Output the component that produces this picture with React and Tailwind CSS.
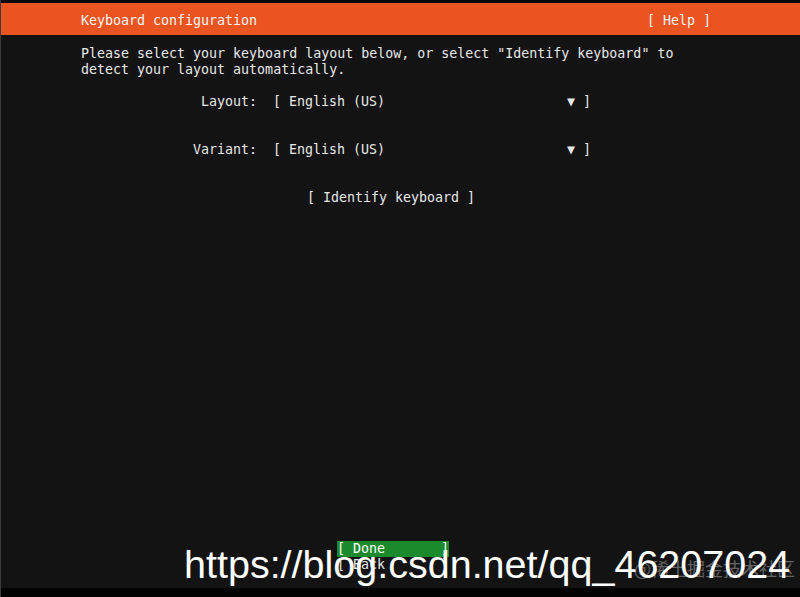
import React from 'react';

const mono = { fontFamily: '"DejaVu Sans Mono", "Liberation Mono", monospace' };

const SelectRow = ({ label, value }) => (
  <div className="flex h-[16px] items-center">
    <div className="w-[176px] text-right">{label}</div>
    <div className="ml-[16px] flex w-[318px] justify-between whitespace-pre">
      <span>[ {value}</span>
      <span>▼ ]</span>
    </div>
  </div>
);

export default function App() {
  return (
    <div
      className="relative flex h-[597px] w-[800px] flex-col overflow-hidden border-l border-[#3c3c3c] bg-[#131313] text-[13.3px] leading-[16px] text-[#e8e8e8]"
      style={mono}
    >
      <div className="h-[3px] bg-[#0a0a0a]" />
      <div className="flex h-[32px] items-center justify-between bg-[#e95420] pl-[80px] pr-[89px] pt-[4px] text-[#f6f6f6]">
        <span>Keyboard configuration</span>
        <span>[ Help ]</span>
      </div>

      <div className="pl-[80px] pt-[11px]">
        <p>Please select your keyboard layout below, or select "Identify keyboard" to</p>
        <p>detect your layout automatically.</p>

        <div className="mt-[16px] flex flex-col gap-[32px]">
          <SelectRow label="Layout:" value="English (US)" />
          <SelectRow label="Variant:" value="English (US)" />
          <div className="h-[16px] pl-[226px]">[ Identify keyboard ]</div>
        </div>
      </div>

      <div className="mt-auto flex flex-col pb-[15px] pl-[336px]">
        <div className="h-[16px] w-[112px] whitespace-pre bg-[#1b8a2c] text-white">[ Done       ]</div>
        <div className="h-[16px] w-[112px] whitespace-pre">[ Back       ]</div>
      </div>
      <div className="h-[9px] bg-[#030303]" />

      <div
        className="pointer-events-none absolute left-[633px] top-[559px] text-[18px] leading-none text-white/35"
        style={{ fontFamily: '"Noto Sans CJK SC", "Noto Sans", sans-serif' }}
      >
        @稀土掘金技术社区
      </div>
      <div
        className="pointer-events-none absolute left-[183px] top-[545px] whitespace-nowrap text-[39.5px] leading-none text-white"
        style={{ fontFamily: '"Liberation Sans", Arial, sans-serif' }}
      >
        https://blog.csdn.net/qq_46207024
      </div>
    </div>
  );
}
